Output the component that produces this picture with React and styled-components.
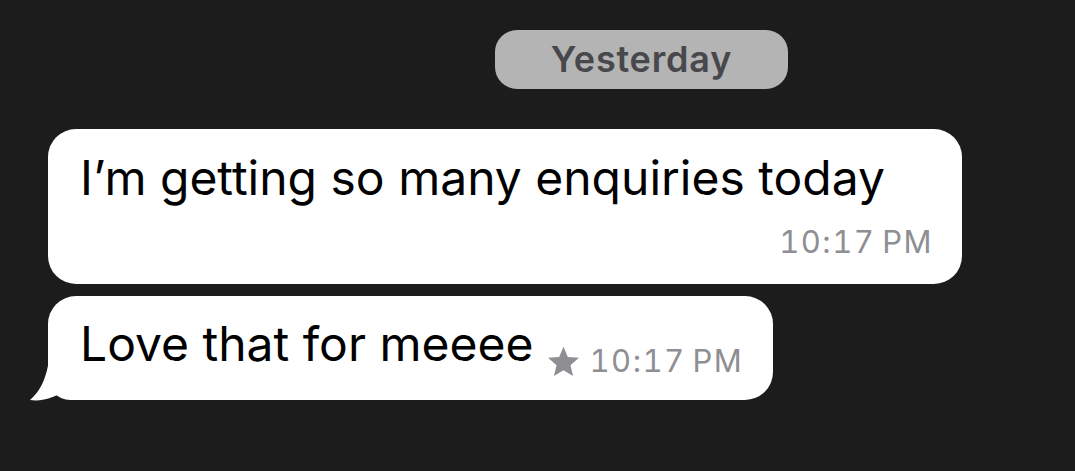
import React from "react";
import styled, { createGlobalStyle } from "styled-components";

const GlobalStyle = createGlobalStyle`
  html, body {
    margin: 0;
    padding: 0;
    background: #1c1c1c;
  }
  body {
    font-family: Inter, "Noto Sans", sans-serif;
  }
`;

const Screen = styled.div`
  width: 1075px;
  height: 471px;
  background: #1c1c1c;
  box-sizing: border-box;
  padding: 30px 0 0 48px;
  display: flex;
  flex-direction: column;
  align-items: flex-start;
`;

const DatePill = styled.div`
  margin-left: 447px;
  width: 293px;
  height: 59px;
  border-radius: 22px;
  background: #b4b4b4;
  color: #48484c;
  font-size: 36px;
  font-weight: 600;
  display: flex;
  align-items: center;
  justify-content: center;
  letter-spacing: 0.8px;
  padding-bottom: 2px;
  box-sizing: border-box;
`;

const Bubble = styled.div`
  position: relative;
  background: #ffffff;
  border-radius: 28px;
  box-sizing: border-box;
  width: ${(p) => p.$width}px;
  height: ${(p) => p.$height}px;
  margin-top: ${(p) => p.$top}px;
  padding: 0 32px;
  color: #000;
`;

const WideBubble = styled(Bubble)`
  display: flex;
  flex-direction: column;
  padding-top: 20px;
`;

const ShortBubble = styled(Bubble)`
  display: flex;
  align-items: flex-start;
  padding-top: 19px;
  border-bottom-left-radius: 22px;
`;

const Text = styled.div`
  position: relative;
  z-index: 1;
  font-size: 48px;
  line-height: 58px;
  white-space: nowrap;
`;

const Time = styled.div`
  position: relative;
  z-index: 1;
  display: flex;
  align-items: center;
  gap: 8px;
  color: #8e8e93;
  font-size: 31px;
  line-height: 36px;
  letter-spacing: 1.5px;
  word-spacing: -3px;
  font-variant-numeric: tabular-nums;
  white-space: nowrap;
  align-self: ${(p) => p.$self || "auto"};
  margin-top: ${(p) => p.$top || 0}px;
  margin-left: ${(p) => p.$left || 0}px;
  margin-right: ${(p) => p.$right || 0}px;
`;

const Tail = styled.svg`
  position: absolute;
  left: -20px;
  bottom: -2px;
  width: 60px;
  height: 60px;
`;

function Star() {
  return (
    <svg width="35" height="35" viewBox="0 0 24 24" style={{ marginTop: 1 }}>
      <path
        d="M12 1.8l2.95 7.1 7.65.6-5.83 5 1.8 7.5L12 18 5.43 22l1.8-7.5-5.83-5 7.65-.6z"
        fill="#8e8e93"
      />
    </svg>
  );
}

export default function App() {
  return (
    <>
      <GlobalStyle />
      <Screen>
        <DatePill>Yesterday</DatePill>
        <WideBubble $width={914} $height={155} $top={40}>
          <Text>I’m getting so many enquiries today</Text>
          <Time $self="flex-end" $top={17} $right={-3}>10:17 PM</Time>
        </WideBubble>
        <ShortBubble $width={725} $height={104} $top={12}>
          <Text>Love that for meeee</Text>
          <Time $top={28} $left={13}>
            <Star />
            10:17 PM
          </Time>
          <Tail viewBox="0 0 60 60">
            <path
              d="M22 0 C22 30 14 48 2 58 C14 60 30 55 40 46 L60 46 L60 0 Z"
              fill="#ffffff"
            />
          </Tail>
        </ShortBubble>
      </Screen>
    </>
  );
}
